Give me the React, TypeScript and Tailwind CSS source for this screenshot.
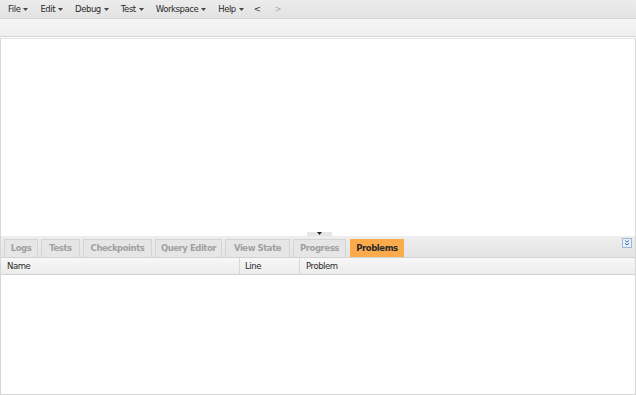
import React from 'react';

const menus = ['File', 'Edit', 'Debug', 'Test', 'Workspace', 'Help'];

const tabs = [
  { label: 'Logs', w: 'w-[34px]' },
  { label: 'Tests', w: 'w-[39px]' },
  { label: 'Checkpoints', w: 'w-[69px]' },
  { label: 'Query Editor', w: 'w-[67px]' },
  { label: 'View State', w: 'w-[65px]' },
  { label: 'Progress', w: 'w-[53px]' },
];

const Caret = () => (
  <svg width="5" height="3" viewBox="0 0 5 3" className="ml-[3px]">
    <path d="M0 0H5L2.5 3Z" fill="#444" />
  </svg>
);

export default function App() {
  return (
    <div
      className="w-[636px] h-[395px] flex flex-col bg-white overflow-hidden text-[#2a2a2a]"
      style={{ fontFamily: '"DejaVu Sans", Verdana, sans-serif' }}
    >
      {/* menu bar */}
      <div className="h-[19px] flex items-center pl-[8px] gap-[12px] bg-gradient-to-b from-[#ececec] to-[#e3e3e3] border-b border-[#d6d6d6] text-[8.5px] tracking-[-0.45px]">
        {menus.map((m) => (
          <span key={m} className="flex items-center">
            {m}
            <Caret />
          </span>
        ))}
        <span className="text-[#333] -ml-[2px]">&lt;</span>
        <span className="text-[#aaa] ml-[2px]">&gt;</span>
      </div>

      {/* toolbar */}
      <div className="h-[18px] bg-gradient-to-b from-[#f5f5f5] to-[#efefef] border-b border-[#d4d4d4]" />

      {/* editor area */}
      <div className="flex-1 border-x border-[#d9d9d9] border-t border-t-[#e2e2e2] mt-[1px]" />

      {/* splitter */}
      <div className="h-[4px] relative bg-white border-x border-[#d9d9d9]">
        <div className="absolute left-[306px] top-0 w-[25px] h-[4px] bg-[#e6e6e6] flex justify-center">
          <svg width="5" height="3" viewBox="0 0 5 3">
            <path d="M0 0H5L2.5 3Z" fill="#222" />
          </svg>
        </div>
      </div>

      {/* bottom panel */}
      <div className="h-[159px] flex flex-col border-x border-b border-[#d6d6d6]">
        <div className="h-[21px] flex items-end bg-gradient-to-b from-[#eeeeee] to-[#e4e4e4] pl-[3px] gap-[3px] relative">
          {tabs.map((t) => (
            <div
              key={t.label}
              className={`${t.w} h-[18px] flex items-center justify-center bg-[#e6e6e6] border-x border-t border-[#d4d4d4] text-[8.5px] font-bold text-[#a0a0a0] tracking-[-0.45px]`}
            >
              {t.label}
            </div>
          ))}
          <div className="w-[54px] h-[18px] ml-[1px] flex items-center justify-center bg-[#fbab4c] text-[8.5px] font-bold text-[#2a2a2a] tracking-[-0.45px]">
            Problems
          </div>
          <div className="absolute right-[3px] top-[2px] w-[10px] h-[10px] border border-[#9db8d8] bg-[#e8f0fa] flex items-center justify-center">
            <svg width="6" height="6" viewBox="0 0 6 6">
              <path d="M1 0.5L3 2.2L5 0.5M1 3.3L3 5L5 3.3" stroke="#3b6fb5" strokeWidth="1" fill="none" />
            </svg>
          </div>
        </div>
        <div className="h-[18px] flex bg-gradient-to-b from-[#f7f7f7] to-[#ececec] border-y border-[#d2d2d2] text-[8.5px] tracking-[-0.45px]">
          <div className="w-[239px] pl-[6px] flex items-center border-r border-[#d8d8d8]">Name</div>
          <div className="w-[60px] pl-[5px] flex items-center border-r border-[#d8d8d8]">Line</div>
          <div className="flex-1 pl-[6px] flex items-center">Problem</div>
        </div>
        <div className="flex-1 bg-white" />
      </div>
    </div>
  );
}
